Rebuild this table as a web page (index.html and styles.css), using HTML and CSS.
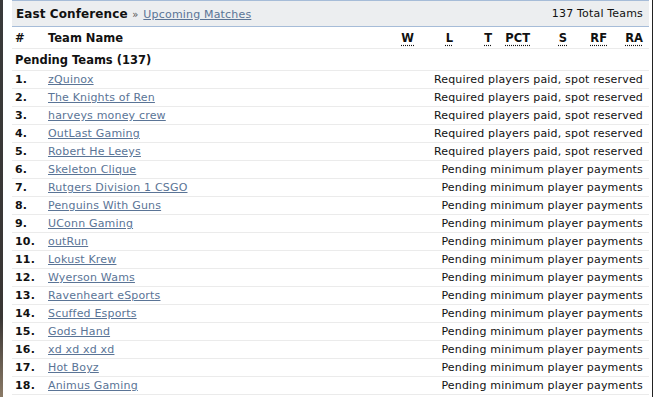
FILE: index.html
```html
<!DOCTYPE html>
<html>
<head>
<meta charset="utf-8">
<link rel="stylesheet" href="styles.css">
</head>
<body>
<div class="page">
  <div class="strip"></div>
  <div class="panel">
    <div class="head">
      <div class="title"><b>East Conference</b> <span class="raquo">»</span> <a href="#">Upcoming Matches</a></div>
      <div class="total">137 Total Teams</div>
    </div>
    <div class="row cols">
      <span class="num">#</span>
      <span class="name">Team Name</span>
      <span class="c cw"><abbr>W</abbr></span>
      <span class="c cl"><abbr>L</abbr></span>
      <span class="c ct"><abbr>T</abbr></span>
      <span class="c cp"><abbr>PCT</abbr></span>
      <span class="c cs"><abbr>S</abbr></span>
      <span class="c crf"><abbr>RF</abbr></span>
      <span class="c cra"><abbr>RA</abbr></span>
    </div>
    <div class="row group">Pending Teams (137)</div>
    <div class="row"><span class="num">1.</span><a class="name" href="#">zQuinox</a><span class="status">Required players paid, spot reserved</span></div>
    <div class="row"><span class="num">2.</span><a class="name" href="#">The Knights of Ren</a><span class="status">Required players paid, spot reserved</span></div>
    <div class="row"><span class="num">3.</span><a class="name" href="#">harveys money crew</a><span class="status">Required players paid, spot reserved</span></div>
    <div class="row"><span class="num">4.</span><a class="name" href="#">OutLast Gaming</a><span class="status">Required players paid, spot reserved</span></div>
    <div class="row"><span class="num">5.</span><a class="name" href="#">Robert He Leeys</a><span class="status">Required players paid, spot reserved</span></div>
    <div class="row"><span class="num">6.</span><a class="name" href="#">Skeleton Clique</a><span class="status">Pending minimum player payments</span></div>
    <div class="row"><span class="num">7.</span><a class="name" href="#">Rutgers Division 1 CSGO</a><span class="status">Pending minimum player payments</span></div>
    <div class="row"><span class="num">8.</span><a class="name" href="#">Penguins With Guns</a><span class="status">Pending minimum player payments</span></div>
    <div class="row"><span class="num">9.</span><a class="name" href="#">UConn Gaming</a><span class="status">Pending minimum player payments</span></div>
    <div class="row"><span class="num">10.</span><a class="name" href="#">outRun</a><span class="status">Pending minimum player payments</span></div>
    <div class="row"><span class="num">11.</span><a class="name" href="#">Lokust Krew</a><span class="status">Pending minimum player payments</span></div>
    <div class="row"><span class="num">12.</span><a class="name" href="#">Wyerson Wams</a><span class="status">Pending minimum player payments</span></div>
    <div class="row"><span class="num">13.</span><a class="name" href="#">Ravenheart eSports</a><span class="status">Pending minimum player payments</span></div>
    <div class="row"><span class="num">14.</span><a class="name" href="#">Scuffed Esports</a><span class="status">Pending minimum player payments</span></div>
    <div class="row"><span class="num">15.</span><a class="name" href="#">Gods Hand</a><span class="status">Pending minimum player payments</span></div>
    <div class="row"><span class="num">16.</span><a class="name" href="#">xd xd xd xd</a><span class="status">Pending minimum player payments</span></div>
    <div class="row"><span class="num">17.</span><a class="name" href="#">Hot Boyz</a><span class="status">Pending minimum player payments</span></div>
    <div class="row"><span class="num">18.</span><a class="name" href="#">Animus Gaming</a><span class="status">Pending minimum player payments</span></div>
  </div>
  <div class="gap"></div>
  <div class="edge"></div>
</div>
</body>
</html>
```
FILE: styles.css
```css
html, body {
  margin: 0;
  padding: 0;
  background: #fff;
  height: 100%;
  overflow: hidden;
}
body {
  font-family: "DejaVu Sans", Verdana, sans-serif;
  font-size: 11px;
  letter-spacing: 0.18px;
  color: #111;
}
.page {
  display: flex;
  height: 397px;
}
.strip {
  width: 3px;
  background: linear-gradient(#3a3a3a, #3a3634 80%, #8a7a66);
  flex: none;
}
.panel {
  margin-left: 9px;
  width: 637px;
  flex: none;
}
.gap {
  width: 3px;
  flex: none;
}
.edge {
  width: 1px;
  background: #222;
  flex: none;
}
.head {
  display: flex;
  justify-content: space-between;
  align-items: center;
  height: 25px;
  background: #eceef0;
  border-top: 1px solid #a6bcd8;
  border-bottom: 1px solid #a6bcd8;
  padding: 0 6px 0 4px;
}
.title b {
  font-size: 12px;
  font-weight: bold;
  letter-spacing: 0.1px;
  color: #111;
}
.raquo {
  color: #555;
  font-size: 10px;
  margin: 0 1px;
}
.title a {
  color: #5a7496;
  text-decoration: underline;
  font-size: 11px;
}
.total {
  font-size: 11px;
}
.row {
  display: flex;
  align-items: center;
  height: 17px;
  border-bottom: 1px solid #ebebeb;
  padding: 0 6px 0 3px;
  white-space: nowrap;
}
.row.cols {
  height: 21px;
  font-weight: bold;
  font-size: 11.5px;
  letter-spacing: 0;
}
.row.group {
  height: 21px;
  font-weight: bold;
  font-size: 11.5px;
  letter-spacing: 0;
}
.num {
  width: 33px;
  font-weight: bold;
  flex: none;
}
.name {
  flex: 1;
}
a.name {
  flex: none;
  color: #5a7496;
  text-decoration: underline;
}
.status {
  margin-left: auto;
}
.c {
  text-align: right;
  flex: none;
}
abbr {
  text-decoration: underline dotted;
  text-underline-offset: 3px;
}
.cw { width: 30px; }
.cl { width: 39px; }
.ct { width: 39px; }
.cp { width: 38px; }
.cs { width: 37px; }
.crf { width: 40px; }
.cra { width: 36px; }
```
